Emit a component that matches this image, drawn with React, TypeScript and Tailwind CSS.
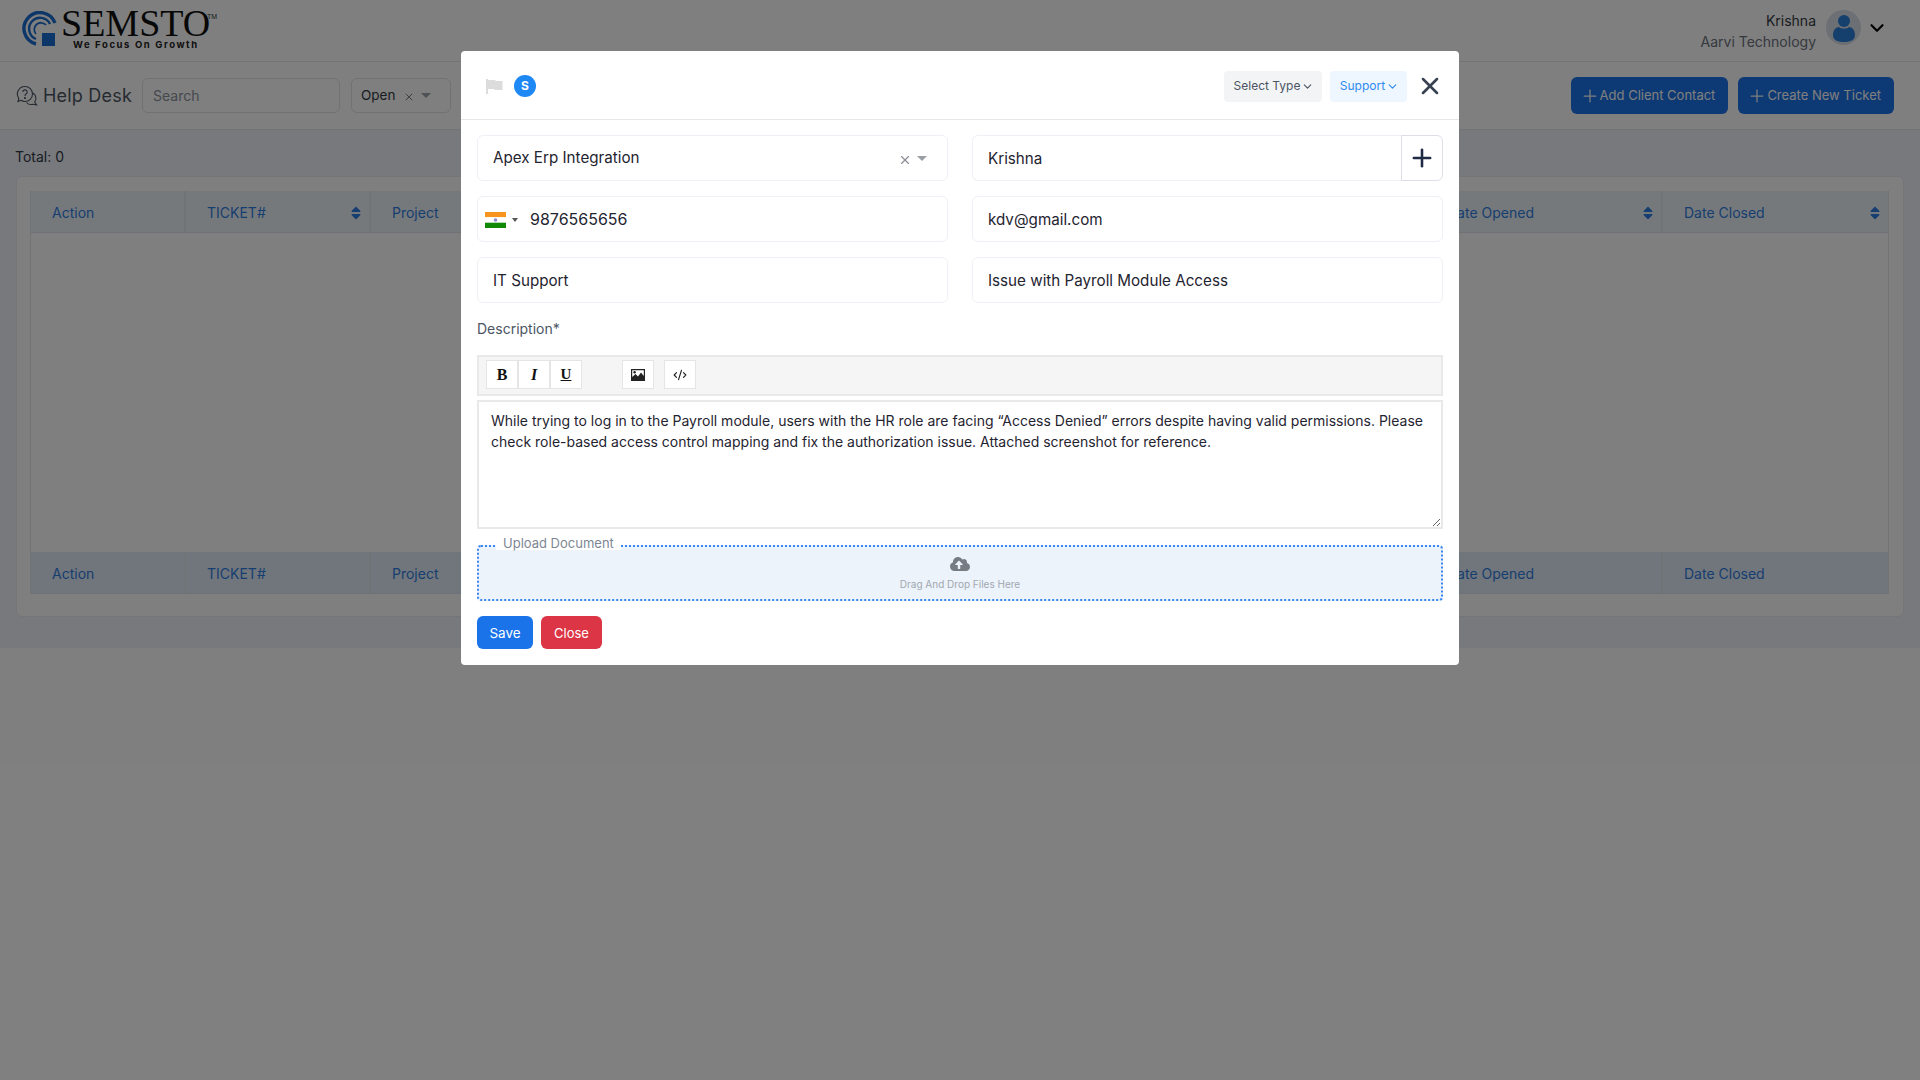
import { ChevronDown, CodeXml, Plus, X } from "lucide-react";
import { FaCloudUploadAlt, FaSort } from "react-icons/fa";

function Logo() {
  return (
    <div className="flex items-start self-start">
      <svg width="36" height="36" viewBox="0 0 36 36" className="mt-[11px] ml-[22px]">
        <path d="M33 12 A16 16 0 1 0 14 33" fill="none" stroke="#1a6fd0" strokeWidth="3.4" />
        <path d="M28 13 A11 11 0 1 0 14 28" fill="none" stroke="#1a6fd0" strokeWidth="2.4" />
        <path d="M24 14 A6.5 6.5 0 1 0 14 23" fill="none" stroke="#1a6fd0" strokeWidth="1.8" />
        <rect x="20" y="22" width="13" height="13" fill="#1a6fd0" />
      </svg>
      <div className="relative ml-[3px] w-[160px]">
        <div className="mt-[6px] font-['Liberation_Serif',serif] text-[38px] leading-[34px] text-[#111111]">SEMSTO</div>
        <div className="absolute left-[146px] top-[13px] font-['Liberation_Sans',sans-serif] text-[7px] leading-[8px] text-[#333333]">TM</div>
        <div className="ml-[12px] text-[9.5px] font-bold leading-[10px] tracking-[1.6px] text-[#222222]">We Focus On Growth</div>
      </div>
    </div>
  );
}

function TopHeader() {
  return (
    <header className="flex h-[62px] items-center justify-between border-b border-[#e5e7eb] bg-white">
      <Logo />
      <div className="flex items-center">
        <div className="text-right">
          <div className="text-sm leading-[21px] text-[#333a44]">Krishna</div>
          <div className="text-sm leading-[21px] text-[#6b7280]">Aarvi Technology</div>
        </div>
        <div className="mb-[6px] ml-[10px] flex h-[35px] w-[35px] items-center justify-center rounded-full bg-[#d8dee6]">
          <svg width="24" height="30" viewBox="0 0 24 30">
            <circle cx="12" cy="8" r="6" fill="#2a7fd8" />
            <path d="M1 22 C1 16 5 14 7 14 C9 16 15 16 17 14 C19 14 23 16 23 22 C23 28 17 29 12 29 C7 29 1 28 1 22 Z" fill="#2a7fd8" />
          </svg>
        </div>
        <ChevronDown size={22} strokeWidth={2.4} className="mb-[6px] ml-[5px] mr-[32px] text-black" />
      </div>
    </header>
  );
}

function HelpIcon() {
  return (
    <svg width="22" height="22" viewBox="0 0 22 22" fill="none" stroke="#4b5563" strokeWidth="1.1">
      <path d="M9 1.5 A7.5 7.5 0 0 1 9 16.5 C7.5 16.5 6 16 4.8 15.3 L2 16.5 L2.8 13.4 A7.5 7.5 0 0 1 9 1.5 Z" fill="#ffffff" />
      <path d="M16.8 8 A6 6 0 0 1 18.6 17 L20.6 20 L16.8 19.2 A6 6 0 0 1 10.5 17.5" />
      <path d="M6.8 7 A2.2 2.2 0 1 1 10 9 C9.2 9.5 9 10 9 11" />
      <circle cx="9" cy="13" r="0.5" fill="#4b5563" />
    </svg>
  );
}

function ActionButton({ label }: { label: string }) {
  return (
    <button className="flex h-[37px] items-center rounded-md bg-[#1a73e8] pl-[9px] pr-[13px] text-[13px] text-white">
      <Plus size={20} strokeWidth={1.5} />
      {label}
    </button>
  );
}

function Toolbar() {
  return (
    <div className="flex h-[68px] items-center justify-between border-b border-[#e5e7eb] bg-white pl-[16px] pr-[26px]">
      <div className="flex items-center">
        <HelpIcon />
        <div className="ml-[5px] text-[18px] tracking-[0.2px] text-[#4b5563]">Help Desk</div>
        <div className="ml-[10px] flex h-[35px] w-[198px] items-center rounded-md border border-[#dfe3e8] pl-[10px] text-sm text-[#8b929c]">Search</div>
        <div className="ml-[11px] flex h-[35px] w-[100px] items-center rounded-md border border-[#dfe3e8] pl-[9px] text-[13.5px] text-[#333a44]">
          Open
          <X size={12} className="ml-[8px] mt-[2px] text-[#7a818b]" />
          <div className="ml-[6px] h-0 w-0 border-x-[5px] border-t-[5px] border-x-transparent border-t-[#9aa0a8]" />
        </div>
      </div>
      <div className="flex gap-[10px]">
        <ActionButton label="Add Client Contact" />
        <ActionButton label="Create New Ticket" />
      </div>
    </div>
  );
}

const columns = [
  { label: "Action", width: "w-[155px]", sort: false },
  { label: "TICKET#", width: "w-[185px]", sort: true },
  { label: "Project", width: "flex-1", sort: false },
  { label: "Date Opened", width: "w-[237px]", sort: true },
  { label: "Date Closed", width: "w-[225px]", sort: true },
];

function TableRow({ footer }: { footer?: boolean }) {
  return (
    <div className={`flex h-[42px] ${footer ? "bg-[#e2ecf8]" : "bg-[#edf2f8]"} border-b border-[#dde3ea]`}>
      {columns.map((col) => (
        <div key={col.label} className={`${col.width} flex items-center justify-between border-r-2 border-[#e3e8ee] pl-[21px] pr-[5px] pt-[2px] last:border-r-0`}>
          <span className="text-sm text-[#2e7de0]">{col.label}</span>
          {col.sort && !footer && <FaSort size={16} className="text-[#2e7de0]" />}
        </div>
      ))}
    </div>
  );
}

function Page() {
  return (
    <div className="h-[518px] bg-[#eef2fa] px-[16px]">
      <div className="-ml-[1px] flex h-[46px] items-end pb-[9px] text-sm leading-[21px] text-[#333a44]">Total: 0</div>
      <div className="h-[441px] rounded-md border border-[#e8ebef] bg-white pl-[13px] pr-[14px] pt-[14px]">
        <div className="border-x border-[#e4e7eb]">
          <TableRow />
          <div className="h-[319px]" />
          <TableRow footer />
        </div>
      </div>
    </div>
  );
}

function Field({ children, className = "" }: { children: React.ReactNode; className?: string }) {
  return (
    <div className={`flex h-[46px] items-center rounded-md border border-[#edf1f6] pt-[2px] text-[15.2px] text-[#1f2430] ${className}`}>{children}</div>
  );
}

function ToolButton({ children, className = "" }: { children: React.ReactNode; className?: string }) {
  return (
    <div className={`flex h-[29px] w-[32px] items-center justify-center border border-[#e5e5e5] bg-white ${className}`}>{children}</div>
  );
}

function IndiaFlag() {
  return (
    <svg width="21" height="16" viewBox="0 0 21 16">
      <rect width="21" height="5.3" fill="#f7941d" />
      <rect y="5.3" width="21" height="5.4" fill="#ffffff" />
      <rect y="10.7" width="21" height="5.3" fill="#128807" />
      <circle cx="10.5" cy="8" r="1.8" fill="#8d8dcc" />
    </svg>
  );
}

function Modal() {
  return (
    <div className="w-[998px] rounded-sm bg-white">
      <div className="flex h-[69px] items-center justify-between border-b border-[#e5e7eb] pl-[25px] pr-[15px] pt-[2px]">
        <div className="flex items-center">
          <svg width="17" height="15" viewBox="0 0 17 15">
            <path d="M0 0 H2 V15 H0 Z M2 1 H9 L10 2 H16.5 V11 H9 L8 10 H2 Z" fill="#dcdcdc" />
          </svg>
          <div className="ml-[11px] flex h-[22px] w-[22px] items-center justify-center rounded-full bg-[#1e88f5] text-[12px] font-bold text-white">S</div>
        </div>
        <div className="flex items-center">
          <div className="flex h-[31px] w-[98px] items-center justify-center gap-[1px] rounded-sm bg-[#f3f4f6] pl-[2px] text-[12px] text-[#4b5563]">
            Select Type
            <ChevronDown size={13} strokeWidth={2} />
          </div>
          <div className="ml-[8px] flex h-[31px] w-[77px] items-center justify-center gap-[1px] rounded-sm bg-[#eef6ff] pl-[2px] text-[12px] text-[#2e8bf0]">
            Support
            <ChevronDown size={13} strokeWidth={2} />
          </div>
          <X size={28} strokeWidth={2.2} className="ml-[9px] text-[#374151]" />
        </div>
      </div>

      <div className="px-[16px] pt-[15px]">
        <div className="grid grid-cols-2 gap-x-[24px] gap-y-[15px]">
          <Field className="justify-between pl-[15px] pr-[20px]">
            <span className="mb-[2px]">Apex Erp Integration</span>
            <span className="flex items-center gap-[5px]">
              <X size={14} className="mt-[2px] text-[#8a8f96]" />
              <span className="mb-[2px] h-0 w-0 border-x-[5px] border-t-[5px] border-x-transparent border-t-[#9a9ea5]" />
            </span>
          </Field>
          <div className="flex">
            <Field className="flex-1 rounded-r-none border-r-0 pl-[15px]">Krishna</Field>
            <div className="flex h-[46px] w-[42px] items-center justify-center rounded-r-md border border-[#dcdfe6]">
              <Plus size={28} strokeWidth={2.2} className="text-[#1f2a44]" />
            </div>
          </div>
          <Field className="pl-[7px]">
            <IndiaFlag />
            <span className="ml-[6px] h-0 w-0 border-x-[3px] border-t-[4px] border-x-transparent border-t-[#555555]" />
            <span className="mb-[3px] ml-[12px] text-[16px]">9876565656</span>
          </Field>
          <Field className="pl-[15px]">kdv@gmail.com</Field>
          <Field className="pl-[15px]">IT Support</Field>
          <Field className="pl-[15px]">Issue with Payroll Module Access</Field>
        </div>

        <div className="mt-[15px] text-sm leading-[21px] text-[#4b5563]">Description*</div>

        <div className="mt-[16px] flex h-[41px] items-center border-2 border-[#e9e9e9] bg-[#f5f5f5] pb-[2px] pl-[7px]">
          <ToolButton className="font-['Liberation_Serif',serif] text-[16px] font-bold text-[#111111]">B</ToolButton>
          <ToolButton className="font-['Liberation_Serif',serif] text-[16px] font-bold italic text-[#111111]">I</ToolButton>
          <ToolButton className="font-['Liberation_Serif',serif] text-[15px] font-bold text-[#111111] underline">U</ToolButton>
          <ToolButton className="ml-[40px]">
            <svg width="14" height="12" viewBox="0 0 14 12">
              <path fillRule="evenodd" d="M0 0 H14 V12 H0 Z M1.2 1.2 V8 L4.5 5 L7 7.5 L10 3.5 L12.8 7 V1.2 Z" fill="#222222" />
              <circle cx="3.6" cy="3.2" r="1.2" fill="#222222" />
            </svg>
          </ToolButton>
          <ToolButton className="ml-[10px]">
            <CodeXml size={14} strokeWidth={2} className="text-[#222222]" />
          </ToolButton>
        </div>

        <textarea
          readOnly
          className="mt-[4px] block h-[129px] w-full border-2 border-[#e9e9e9] px-[12px] py-[8px] text-sm leading-[21px] text-[#1f2430] outline-none"
          defaultValue="While trying to log in to the Payroll module, users with the HR role are facing “Access Denied” errors despite having valid permissions. Please check role-based access control mapping and fix the authorization issue. Attached screenshot for reference."
        />

        <div className="relative mt-[16px] flex h-[56px] flex-col items-center rounded-sm border-2 border-dotted border-[#3b87f0] bg-[#ecf3fb] pt-[7px]">
          <div className="absolute left-[17px] top-[-11px] bg-white px-[7px] text-[13px] leading-[14px] text-[#7d8794]">Upload Document</div>
          <FaCloudUploadAlt size={20} className="text-[#777c83]" />
          <div className="mt-[3px] text-[10px] leading-[14px] text-[#a1a7b0]">Drag And Drop Files Here</div>
        </div>

        <div className="mt-[15px] flex gap-[8px] pb-[16px]">
          <button className="flex h-[33px] w-[56px] items-center justify-center rounded-md bg-[#1a73e8] pt-[1px] text-[13.5px] leading-[20px] text-white">Save</button>
          <button className="flex h-[33px] w-[61px] items-center justify-center rounded-md bg-[#dc3545] pt-[1px] text-[13px] leading-[20px] text-white">Close</button>
        </div>
      </div>
    </div>
  );
}

export default function App() {
  return (
    <div className="relative min-h-screen bg-white font-['Inter',sans-serif]">
      <TopHeader />
      <Toolbar />
      <Page />
      {/* Dim layer and modal */}
      <div className="absolute inset-0 flex justify-center bg-black/50 pt-[51px]">
        <div>
          <Modal />
        </div>
      </div>
    </div>
  );
}
